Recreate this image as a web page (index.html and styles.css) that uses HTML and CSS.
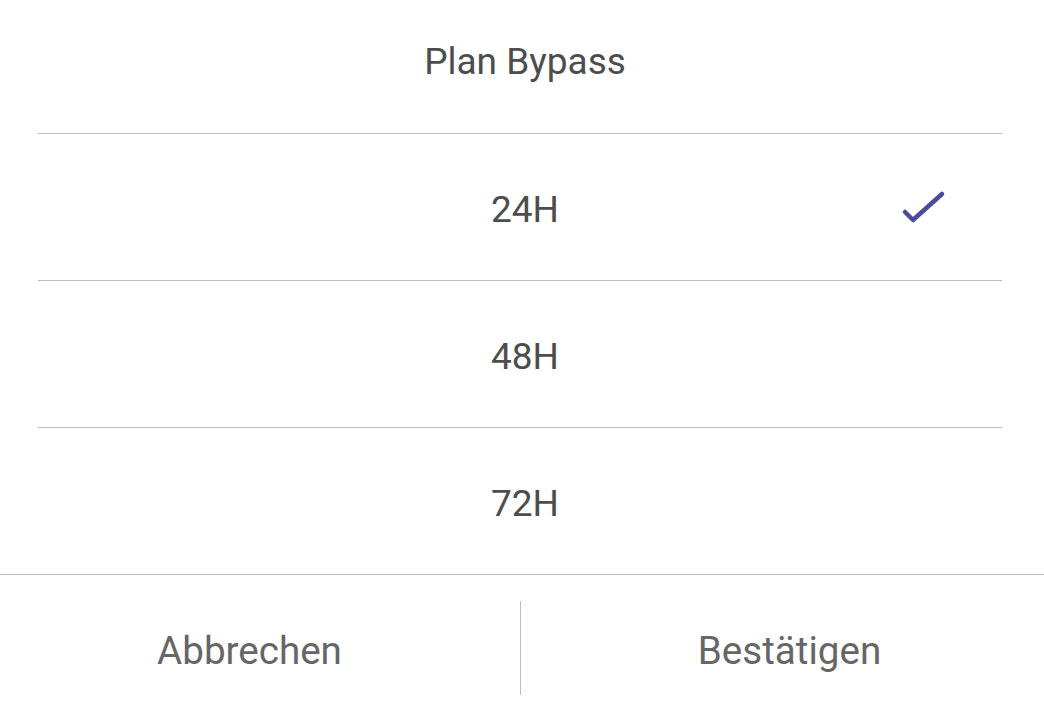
FILE: index.html
```html
<!DOCTYPE html>
<html>
    <head>
        <title>Plan Bypass</title>
        <link rel="stylesheet" href="styles.css">
    </head>
    <body>
        <div class='dialog'>
            <div class='title'>Plan Bypass</div>
            <div class='options'>
                <div class='option selected'>
                    <span>24H</span>
                    <svg class='check' width="48" height="40" viewBox="0 0 48 40">
                        <path d="M5 24 L13 32 L42 6" fill="none" stroke="#4b4b9c" stroke-width="4.5" stroke-linecap="round" stroke-linejoin="round"/>
                    </svg>
                </div>
                <div class='option'><span>48H</span></div>
                <div class='option'><span>72H</span></div>
            </div>
            <div class='actions'>
                <div class='action cancel'>Abbrechen</div>
                <div class='divider'></div>
                <div class='action confirm'>Bestätigen</div>
            </div>
        </div>
    </body>
</html>
```

FILE: styles.css
```css
body {
    margin: 0;
    background: #fff;
    font-family: Roboto, "Noto Sans", sans-serif;
}
.dialog {
    width: 1044px;
    height: 712px;
    display: flex;
    flex-direction: column;
}
.title {
    height: 134px;
    margin: 0 42px 0 38px;
    border-bottom: 1px solid #bdbdbd;
    display: flex;
    align-items: center;
    justify-content: center;
    padding: 0 0 10px 10px;
    box-sizing: border-box;
    font-size: 37px;
    color: #4d4d4d;
}
.options {
    margin: 0 42px 0 38px;
}
.option {
    height: 147px;
    border-bottom: 1px solid #bdbdbd;
    box-sizing: border-box;
    display: flex;
    align-items: center;
    justify-content: center;
    padding: 4px 0 0 10px;
    position: relative;
    font-size: 37px;
    color: #4d4d4d;
}
.option:last-child {
    border-bottom: none;
    height: 146px;
}
.check {
    position: absolute;
    left: 862px;
    top: 54px;
}
.actions {
    border-top: 1px solid #bdbdbd;
    flex: 1;
    display: flex;
    align-items: center;
    padding-top: 9px;
}
.action {
    box-sizing: border-box;
    text-align: center;
    font-size: 38.6px;
    color: #666;
    padding-top: 5px;
}
.cancel {
    width: 520px;
    padding-right: 21px;
}
.confirm {
    flex: 1;
    padding-left: 14px;
}
.divider {
    width: 1px;
    height: 94px;
    background: #bdbdbd;
}
```
